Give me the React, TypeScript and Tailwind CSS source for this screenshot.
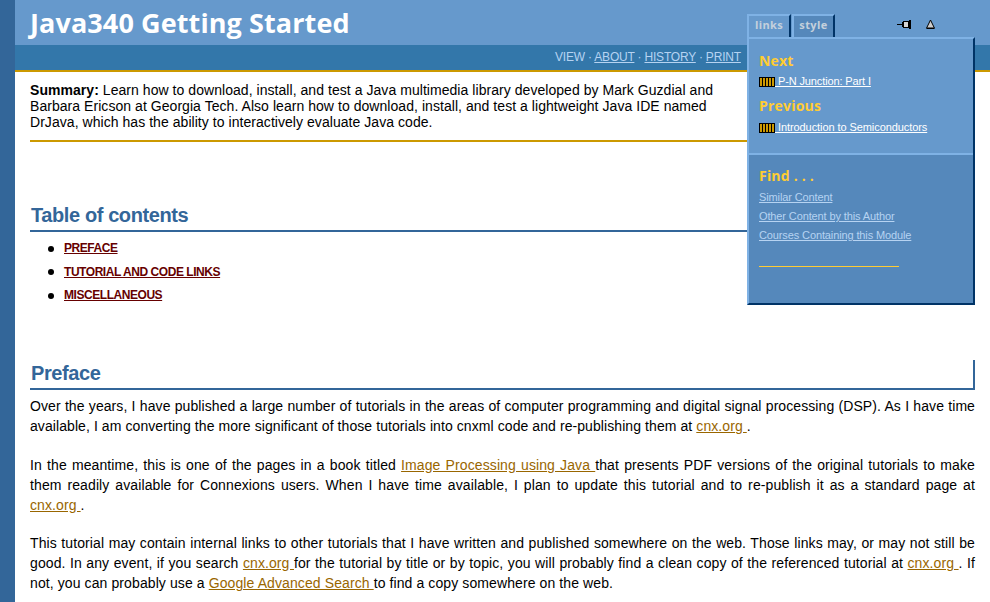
const sans = "font-['Liberation_Sans',Arial,sans-serif]";

function BookIcon() {
    return (
        <svg width="16" height="10" viewBox="0 0 16 10" className="shrink-0">
            <rect width="16" height="10" fill="#000" />
            <rect x="1" y="1" width="14" height="8" fill="#cc9900" />
            <path d="M3.5 1v8M6.5 1v8M9.5 1v8M12.5 1v8" stroke="#000" strokeWidth="1" />
        </svg>
    );
}

function PinIcon() {
    return (
        <svg width="14" height="12" viewBox="0 0 14 12">
            <path d="M0 7.5H5" stroke="#000" strokeWidth="1" />
            <path d="M5.5 5v5" stroke="#000" strokeWidth="1" />
            <rect x="6.5" y="4.5" width="5" height="6" fill="#d4d4d4" stroke="#000" strokeWidth="1" />
            <rect x="12" y="3" width="2" height="9" fill="#000" />
        </svg>
    );
}

function ArrowIcon() {
    return (
        <svg width="9" height="10" viewBox="0 0 9 10">
            <path d="M4.5 1L8.4 9H0.6Z" fill="#ccc" stroke="#000" strokeWidth="1" />
            <path d="M0.5 9.5H8.5" stroke="#000" strokeWidth="1" />
        </svg>
    );
}

function PanelLink({ children }: { children: string }) {
    return <a href="#" className="block text-[11px] leading-[13px] tracking-[-0.12px] text-[#b6d3f2] underline">{children}</a>;
}

function Toolbox() {
    return (
        <div className="absolute left-[747px] top-[14px] w-[228px] font-['Open_Sans',Tahoma,sans-serif]">
            <div className="flex h-[23px] items-stretch">
                <div className="w-[44px] border-t-2 border-l-2 border-r-2 border-t-[#7fb2e5] border-l-[#7fb2e5] border-r-[#003366] bg-[#6699cc] text-center text-[11px] font-bold leading-[18px] tracking-[0.4px] text-[#c4d0dc]">links</div>
                <div className="ml-px w-[43px] border-t-2 border-l-2 border-r-2 border-t-[#7fb2e5] border-l-[#7fb2e5] border-r-[#003366] bg-[#5588bb] text-center text-[11px] font-bold leading-[18px] tracking-[0.4px] text-[#c4d0dc]">style</div>
                <div className="ml-[62px] mt-[3px]"><PinIcon /></div>
                <div className="ml-[15px] mt-[5px]"><ArrowIcon /></div>
            </div>
            <div className="border-2 border-t-[#7fb2e5] border-l-[#7fb2e5] border-r-[#003366] border-b-[#003366]">
                <div className="h-[114px] bg-[#6699cc] pl-[10px] pt-[14px]">
                    <h3 className="text-[14px] font-bold leading-[16px] tracking-[0.2px] text-[#ffcc33]">Next</h3>
                    <div className={`mt-[6px] flex items-center ${sans}`}>
                        <BookIcon />
                        <a href="#" className="whitespace-pre text-[11px] leading-[13px] tracking-[-0.12px] text-white underline"> P-N Junction: Part I</a>
                    </div>
                    <h3 className="mt-[10px] text-[14px] font-bold leading-[16px] tracking-[0.2px] text-[#ffcc33]">Previous</h3>
                    <div className={`mt-[7px] flex items-center ${sans}`}>
                        <BookIcon />
                        <a href="#" className="whitespace-pre text-[11px] leading-[13px] tracking-[-0.08px] text-white underline"> Introduction to Semiconductors</a>
                    </div>
                </div>
                <div className="h-[150px] border-t-2 border-[#7fb2e5] bg-[#5588bb] pl-[10px] pt-[13px]">
                    <h3 className="text-[14px] font-bold leading-[16px] tracking-[0.2px] text-[#ffcc33]">Find . . .</h3>
                    <div className={`mt-[7px] flex flex-col gap-[6px] ${sans}`}>
                        <PanelLink>Similar Content</PanelLink>
                        <PanelLink>Other Content by this Author</PanelLink>
                        <PanelLink>Courses Containing this Module</PanelLink>
                    </div>
                    <div className="mt-[24px] h-px w-[140px] bg-[#ffcc33]" />
                </div>
            </div>
        </div>
    );
}

function TextLink({ children }: { children: string }) {
    return <a href="#" className="whitespace-pre-wrap text-[#996600] underline">{children}</a>;
}

function TocItem({ children }: { children: string }) {
    return (
        <li className="flex items-center gap-[10px]">
            <span className="h-[6px] w-[6px] rounded-full bg-black" />
            <a href="#" className="underline">{children}</a>
        </li>
    );
}

export default function App() {
    return (
        <div className={`relative flex h-[602px] w-[990px] overflow-hidden bg-white text-black ${sans}`}>
            <div className="w-[15px] shrink-0 bg-[#336699]" />
            <div className="min-w-0 flex-1">
                <div className="h-[45px] bg-[#6699cc] pl-[15px]">
                    <h1 className="font-['Open_Sans',Tahoma,sans-serif] text-[27px] font-bold leading-[45px] tracking-[0.1px] text-white">Java340 Getting Started</h1>
                </div>
                <div className="h-[27px] border-b-2 border-[#cc9900] bg-[#3377aa] pl-[540px] text-[12px] leading-[25px] tracking-[-0.2px] text-[#b6d3f2]">
                    VIEW · <a href="#" className="underline">ABOUT</a> · <a href="#" className="underline">HISTORY</a> · <a href="#" className="underline">PRINT</a>
                </div>
                <div className="px-[15px]">
                    <div className="border-b-2 border-[#cc9900] py-[10px] text-[14px] leading-[16px] tracking-[0.05px]">
                        <p className="w-[700px]"><b>Summary:</b> Learn how to download, install, and test a Java multimedia library developed by Mark Guzdial and Barbara Ericson at Georgia Tech. Also learn how to download, install, and test a lightweight Java IDE named DrJava, which has the ability to interactively evaluate Java code.</p>
                    </div>
                    <h2 className="mt-[59px] border-b-2 border-[#336699] pl-px text-[20px] font-bold leading-[29px] tracking-[-0.4px] text-[#336699]">Table of contents</h2>
                    <ul className="ml-[18px] mt-[5px] text-[12px] font-bold leading-[23.5px] tracking-[-0.45px] text-[#660000]">
                        <TocItem>PREFACE</TocItem>
                        <TocItem>TUTORIAL AND CODE LINKS</TocItem>
                        <TocItem>MISCELLANEOUS</TocItem>
                    </ul>
                    <h2 className="mt-[52.5px] h-[30px] border-b-2 border-r-2 border-[#336699] pl-px text-[20px] font-bold leading-[27px] tracking-[-0.4px] text-[#336699]">Preface</h2>
                    <div className="mt-[6px] flex flex-col gap-[18.5px] text-justify text-[14px] leading-[20px] tracking-[0.1px]">
                        <p className="tracking-[0.08px]">Over the years, I have published a large number of tutorials in the areas of computer programming and digital signal processing (DSP). As I have time available, I am converting the more significant of those tutorials into cnxml code and re-publishing them at <TextLink>cnx.org </TextLink>.</p>
                        <p>In the meantime, this is one of the pages in a book titled <TextLink>Image Processing using Java </TextLink>that presents PDF versions of the original tutorials to make them readily available for Connexions users. When I have time available, I plan to update this tutorial and to re-publish it as a standard page at <TextLink>cnx.org </TextLink>.</p>
                        <p>This tutorial may contain internal links to other tutorials that I have written and published somewhere on the web. Those links may, or may not still be good. In any event, if you search <TextLink>cnx.org </TextLink>for the tutorial by title or by topic, you will probably find a clean copy of the referenced tutorial at <TextLink>cnx.org </TextLink>. If not, you can probably use a <TextLink>Google Advanced Search </TextLink>to find a copy somewhere on the web.</p>
                    </div>
                </div>
            </div>
            <Toolbox />
        </div>
    );
}
